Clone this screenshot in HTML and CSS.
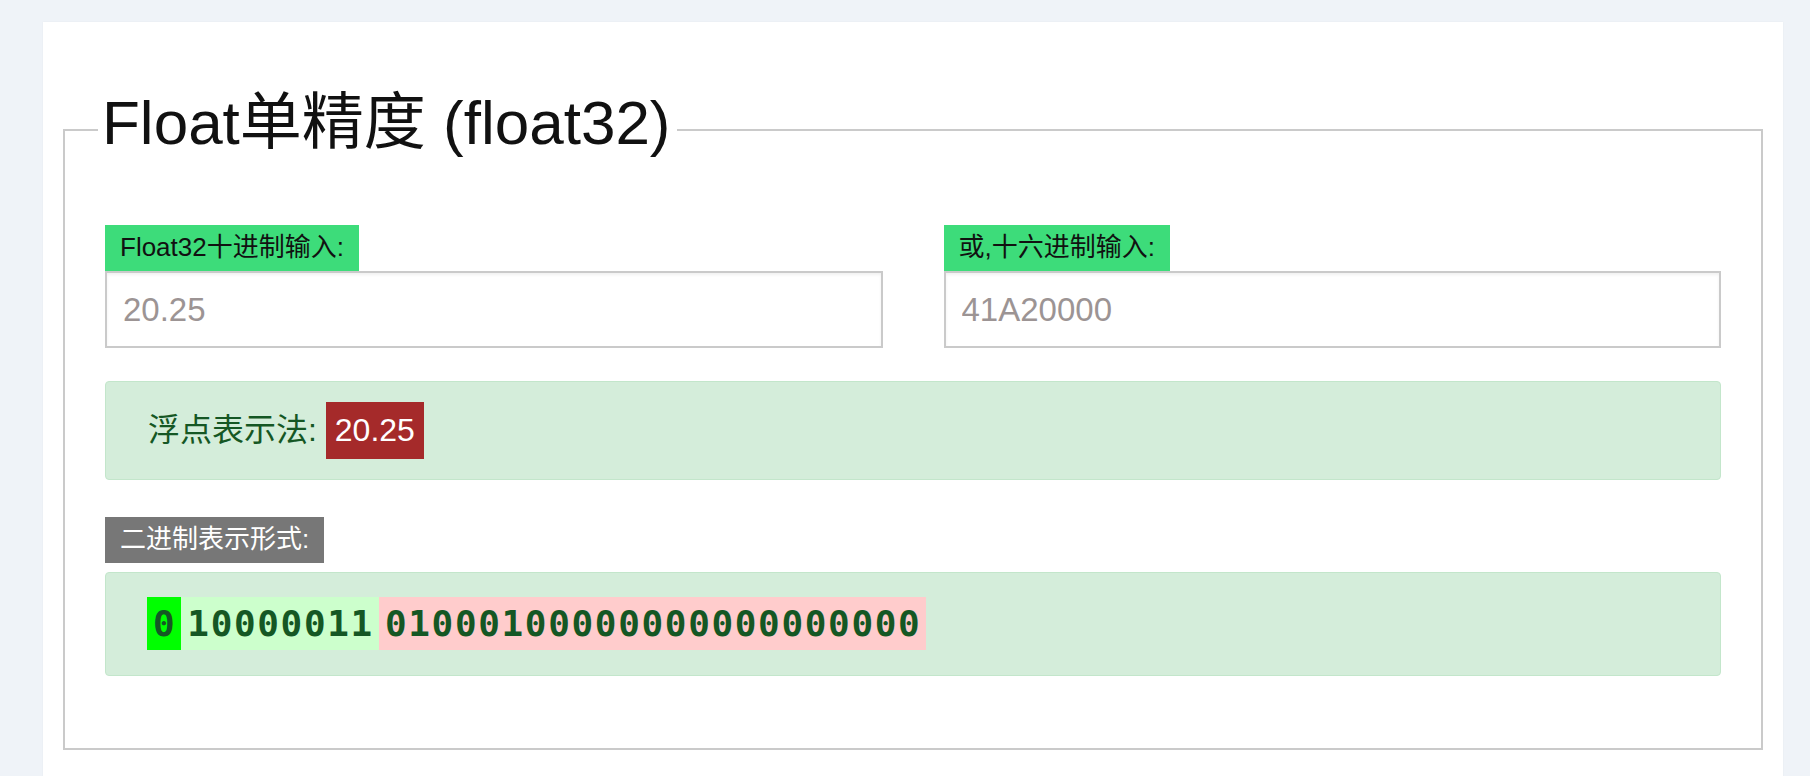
FILE: index.html
```html
<!DOCTYPE html>
<html lang="zh-CN">
<head>
<meta charset="utf-8">
<title>Float单精度 (float32)</title>
<link rel="stylesheet" href="styles.css">
</head>
<body>
<div class="card">
  <fieldset class="panel">
    <legend class="panel-title">Float单精度 (float32)</legend>
    <div class="inputs">
      <div class="field">
        <span class="tag tag-green">Float32十进制输入:</span>
        <input class="text-input" type="text" value="20.25">
      </div>
      <div class="field">
        <span class="tag tag-green">或,十六进制输入:</span>
        <input class="text-input" type="text" value="41A20000">
      </div>
    </div>
    <div class="alert alert-float">浮点表示法: <span class="badge">20.25</span></div>
    <span class="tag tag-gray">二进制表示形式:</span>
    <div class="alert alert-bits"><span class="bits bits-sign">0</span><span class="bits bits-exp">10000011</span><span class="bits bits-man">01000100000000000000000</span></div>
  </fieldset>
</div>
</body>
</html>
```

FILE: styles.css
```css
html, body {
  margin: 0;
  padding: 0;
}
body {
  background: #eff3f8;
  font-family: "Liberation Sans", "Noto Sans CJK SC", sans-serif;
  color: #111;
}
.card {
  margin: 22px 27px 0 43px;
  background: #fff;
  padding: 0 20px 40px;
  box-shadow: 0 0 2px rgba(0, 0, 0, 0.04);
  display: flow-root;
}
.panel {
  margin: 66px 0 0;
  border: 2px solid #cacaca;
  padding: 53px 40px 72px;
  min-width: 0;
}
.panel-title {
  font-size: 62px;
  line-height: 70px;
  padding: 0 6px 14px 4px;
  margin-left: -7px;
  color: #111;
  font-weight: normal;
}
.inputs {
  display: grid;
  grid-template-columns: 1fr 1fr;
  column-gap: 61px;
}
.field {
  display: flex;
  flex-direction: column;
  align-items: flex-start;
}
.tag {
  display: inline-block;
  font-size: 26px;
  line-height: 25px;
  padding: 10px 15px 11px;
  white-space: nowrap;
}
.tag-green {
  background: #3ddc7a;
  color: #111;
}
.tag-gray {
  background: #777;
  color: #fff;
}
.text-input {
  display: block;
  width: 100%;
  box-sizing: border-box;
  height: 77px;
  margin: 0;
  border: 2px solid #cacaca;
  padding: 0 16px;
  font-family: "Liberation Sans", sans-serif;
  font-size: 33px;
  color: #9c9494;
  background: #fff;
  box-shadow: inset 0 2px 3px rgba(0, 0, 0, 0.06);
  outline: none;
}
.alert {
  border: 1px solid #c3e6cb;
  background: #d4edda;
  color: #155724;
  border-radius: 4px;
}
.alert-float {
  margin: 33px 0 37px;
  padding: 20px 42px;
  font-size: 32px;
  line-height: 32px;
}
.badge {
  display: inline-block;
  background: #a52a2a;
  color: #fff;
  font-size: 32px;
  line-height: 37px;
  padding: 10px 9px;
}
.alert-bits {
  margin-top: 9px;
  padding: 24px 41px 25px;
  display: flex;
}
.bits {
  font-family: "DejaVu Sans Mono", monospace;
  font-weight: bold;
  font-size: 36px;
  line-height: 53px;
  letter-spacing: 1.65px;
  padding: 0 5px 0 6px;
  color: #155724;
}
.bits-sign {
  background: #00ff00;
}
.bits-exp {
  background: #ccffcc;
}
.bits-man {
  background: #ffcccc;
}
```
